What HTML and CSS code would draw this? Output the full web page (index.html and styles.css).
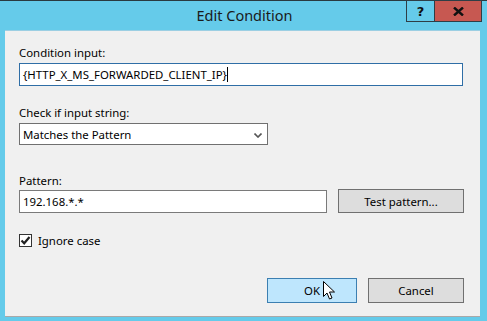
FILE: index.html
```html
<!DOCTYPE html>
<html>
<head>
<meta charset="utf-8">
<link rel="stylesheet" href="styles.css">
</head>
<body>
<div class="window">
  <div class="titlebar">
    <div class="title">Edit Condition</div>
    <div class="caption-buttons">
      <div class="cap-btn help">?</div>
      <div class="cap-btn close">
        <svg width="11" height="9" viewBox="0 0 11 9"><path d="M1 0.5 L10 8.5 M10 0.5 L1 8.5" stroke="#111" stroke-width="2.4"/></svg>
      </div>
    </div>
  </div>
  <div class="client">
    <div class="label first">Condition input:</div>
    <div class="textbox focused wide">{HTTP_X_MS_FORWARDED_CLIENT_IP}<span class="caret"></span></div>

    <div class="label">Check if input string:</div>
    <div class="select">
      <span>Matches the Pattern</span>
      <svg class="chev" width="8" height="5" viewBox="0 0 8 5"><path d="M0.5 0.5 L4 4 L7.5 0.5" fill="none" stroke="#555" stroke-width="1.6"/></svg>
    </div>

    <div class="label pat">Pattern:</div>
    <div class="pattern-row">
      <div class="textbox pattern">192.168.*.*</div>
      <div class="button test">Test pattern...</div>
    </div>

    <div class="check-row">
      <span class="checkbox">
        <svg width="11" height="11" viewBox="0 0 11 11"><path d="M1.5 5.5 L4.2 8.3 L9.5 2" fill="none" stroke="#222" stroke-width="2.2"/></svg>
      </span>
      <span class="check-label">Ignore case</span>
    </div>

    <div class="button-row">
      <div class="button ok">OK</div>
      <div class="button cancel">Cancel</div>
    </div>

    <svg class="cursor" width="14" height="20" viewBox="0 0 14 20">
      <path d="M0.5 0.5 L0.5 15.5 L4 12 L6.5 18 L9 17 L6.5 11 L11.5 11 Z" fill="#fff" stroke="#000" stroke-width="1" stroke-linejoin="miter"/>
    </svg>
  </div>
</div>
</body>
</html>
```

FILE: styles.css
```css
html, body {
  margin: 0;
  padding: 0;
}
body {
  width: 487px;
  height: 321px;
  overflow: hidden;
  font-family: "Noto Sans", "Open Sans", sans-serif;
  font-size: 11.4px;
  color: #000;
}
.window {
  width: 487px;
  height: 321px;
  background: #65cbea;
  border-top: 1px solid #2a3a40;
  box-sizing: border-box;
  display: flex;
  flex-direction: column;
}
.titlebar {
  height: 29px;
  position: relative;
  display: flex;
  justify-content: center;
}
.title {
  font-size: 14.5px;
  line-height: 29px;
  color: #1a1a1a;
  padding-left: 2px;
}
.caption-buttons {
  position: absolute;
  top: -1px;
  right: 5px;
  display: flex;
}
.cap-btn {
  height: 20px;
  border: 1px solid #2e3e46;
  display: flex;
  align-items: center;
  justify-content: center;
  box-sizing: content-box;
}
.help {
  width: 27px;
  background: #65cbea;
  font-weight: bold;
  font-size: 13px;
  font-family: "DejaVu Sans", sans-serif;
  color: #111;
  border-right: none;
}
.close {
  width: 46px;
  background: #c75851;
}
.client {
  position: relative;
  margin: 0 7px 0 5px;
  height: 287px;
  background: #f0f0f0;
  border-top: 1px solid #9ccfe3;
  border-bottom: 1px solid #a9a9a9;
  box-sizing: border-box;
  padding: 0 0 0 14px;
}
.label {
  line-height: 16px;
  height: 16px;
  margin-top: 19px;
  margin-bottom: 2px;
}
.label.first {
  margin-top: 14px;
}
.label.pat {
  margin-top: 28px;
  margin-bottom: 1px;
}
.textbox {
  background: #fff;
  border: 1px solid #7a7a7a;
  height: 23px;
  box-sizing: border-box;
  line-height: 21px;
  padding-left: 3px;
  white-space: nowrap;
}
.textbox.focused {
  border-color: #2f6ea6;
}
.wide {
  width: 444px;
}
.caret {
  display: inline-block;
  width: 1px;
  height: 15px;
  background: #000;
  vertical-align: -3px;
}
.select {
  width: 249px;
  height: 22px;
  box-sizing: border-box;
  background: #fff;
  border: 1px solid #707070;
  display: flex;
  align-items: center;
  justify-content: space-between;
  padding: 0 5px 0 3px;
}
.chev {
  margin-top: 2px;
}
.pattern-row {
  display: flex;
  gap: 11px;
}
.pattern {
  width: 308px;
}
.button {
  height: 25px;
  box-sizing: border-box;
  border: 1px solid #707070;
  background: #dddddd;
  display: flex;
  align-items: center;
  justify-content: center;
}
.test {
  width: 126px;
  height: 24px;
  margin-top: -1px;
}
.check-row {
  margin-top: 21px;
  display: flex;
  align-items: center;
  gap: 6px;
  height: 13px;
}
.checkbox {
  width: 13px;
  height: 13px;
  box-sizing: border-box;
  border: 1px solid #333;
  background: #fff;
  display: flex;
  align-items: center;
  justify-content: center;
}
.check-label {
  line-height: 16px;
}
.button-row {
  margin-top: 31px;
  display: flex;
  justify-content: flex-end;
  gap: 11px;
  padding-right: 16px;
}
.ok {
  width: 90px;
  background: #bee6fd;
  border-color: #3c7fb1;
}
.cancel {
  width: 96px;
}
.cursor {
  position: absolute;
  left: 318px;
  top: 250px;
}
```
